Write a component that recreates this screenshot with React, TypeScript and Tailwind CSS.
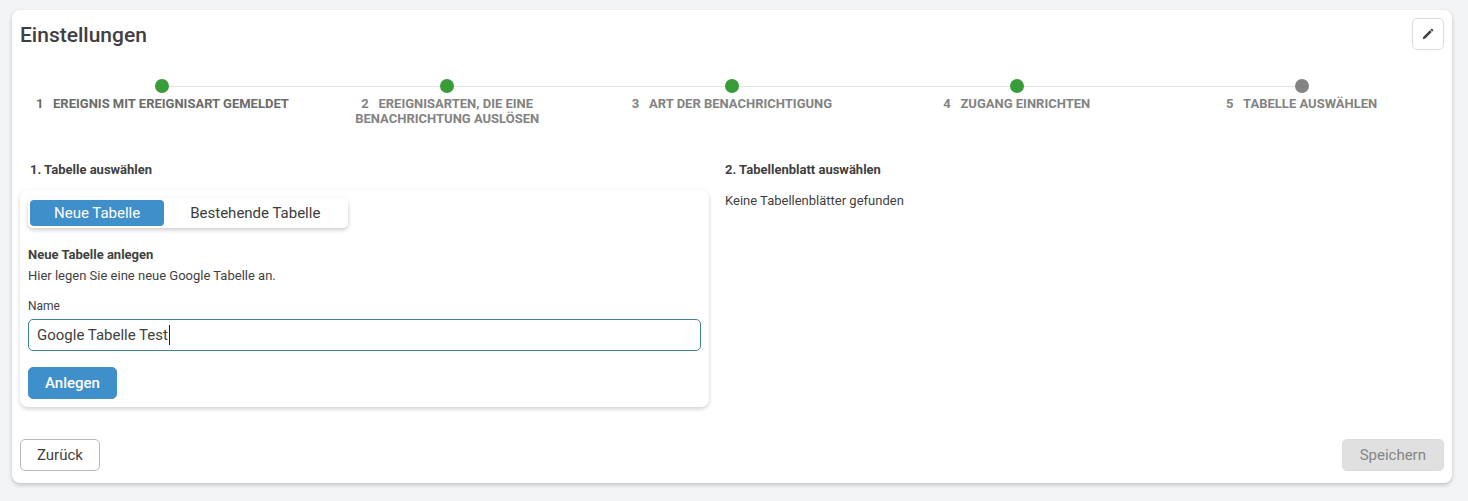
import { useState } from "react";

const steps = [
  { label: "Ereignis mit Ereignisart gemeldet", done: true },
  { label: "Ereignisarten, die eine Benachrichtung auslösen", done: true },
  { label: "Art der Benachrichtigung", done: true },
  { label: "Zugang einrichten", done: true },
  { label: "Tabelle auswählen", done: false },
];

function PencilIcon() {
  return (
    <svg viewBox="0 0 14 14" className="size-[14px]" fill="currentColor" aria-hidden="true">
      <path d="M1.7 12.3 2.4 9.7 8.9 3.2 10.8 5.1 4.3 11.6Z" />
      <path d="M9.4 2.7 10.2 1.9Q10.7 1.5 11.2 1.9L12.1 2.8Q12.5 3.3 12.1 3.8L11.3 4.6Z" />
    </svg>
  );
}

function Stepper() {
  return (
    <ol className="mt-7 grid grid-cols-5">
      {steps.map((step, index) => (
        <li key={step.label} className="flex flex-col items-center">
          <div className="flex w-full items-center">
            <span className={index === 0 ? "flex-1" : "h-px flex-1 bg-[#e2e2e2]"} />
            <span
              className={
                step.done
                  ? "size-[14px] rounded-full bg-[#389c38]"
                  : "size-[14px] rounded-full bg-[#838383]"
              }
            />
            <span
              className={index === steps.length - 1 ? "flex-1" : "h-px flex-1 bg-[#e2e2e2]"}
            />
          </div>
          <span
            className={
              index === 0
                ? "mt-[3px] px-3 text-center text-[13px] leading-[15px] font-bold text-[#6b6b6b] uppercase"
                : "mt-[3px] px-10 text-center text-[13px] leading-[15px] font-bold text-[#838383] uppercase"
            }
          >
            {`${index + 1}\u00a0\u00a0\u00a0${step.label}`}
          </span>
        </li>
      ))}
    </ol>
  );
}

export default function App() {
  const [tab, setTab] = useState("new");
  const [name, setName] = useState("Google Tabelle Test");
  const [pristine, setPristine] = useState(true);
  const active = "h-[26px] rounded-[4px] bg-[#3f8fcb] px-6 text-[15px] text-white";
  const inactive = "h-[26px] rounded-[4px] px-[26px] text-[15px] text-[#3c3c3e]";

  return (
    <div className="min-h-screen bg-[#f2f4f5] px-3 py-[10px] pr-4 font-['Roboto',sans-serif] text-[13px] leading-5 text-[#3f3f41]">
      <main className="rounded-lg bg-white px-2 pt-2 pb-3 shadow-[0_2px_4px_rgba(0,0,0,0.2)]">
        <header className="flex items-start justify-between">
          <h1 className="pt-px text-[21px] leading-8 font-medium">Einstellungen</h1>
          <button
            type="button"
            aria-label="Bearbeiten"
            className="flex size-8 items-center justify-center rounded-[5px] border border-[#dcdcdc]"
          >
            <PencilIcon />
          </button>
        </header>

        <Stepper />

        <div className="mt-[34px] grid grid-cols-[689fr_719fr] gap-4">
          <section>
            <h2 className="pl-[10px] font-bold">1. Tabelle auswählen</h2>
            <div className="mt-[10px] rounded-lg p-2 shadow-[0_2px_4px_rgba(0,0,0,0.18)]">
              <div className="flex">
                <div className="flex rounded-[5px] p-[2px] shadow-[0_2px_4px_rgba(0,0,0,0.2)]">
                  <button
                    type="button"
                    className={tab === "new" ? active : inactive}
                    onClick={() => setTab("new")}
                  >
                    Neue Tabelle
                  </button>
                  <button
                    type="button"
                    className={tab === "existing" ? active : inactive}
                    onClick={() => setTab("existing")}
                  >
                    Bestehende Tabelle
                  </button>
                </div>
              </div>
              <h3 className="mt-4 leading-[21px] font-bold">Neue Tabelle anlegen</h3>
              <p className="leading-[21px]">Hier legen Sie eine neue Google Tabelle an.</p>
              <label htmlFor="table-name" className="mt-[10px] block text-xs leading-5">
                Name
              </label>
              <div className="relative mt-[3px]">
                <input
                  id="table-name"
                  type="text"
                  value={name}
                  onFocus={() => setPristine(false)}
                  onChange={(event) => setName(event.target.value)}
                  className="block h-8 w-full rounded-[5px] border border-[#418590] px-2 text-[15px] outline-none"
                />
                {pristine && (
                  <span className="pointer-events-none absolute top-[6px] left-[141px] h-5 w-px bg-[#222222]" />
                )}
              </div>
              <button
                type="button"
                className="mt-4 block h-8 rounded-[5px] border border-[#3f8fcb] bg-[#3f8fcb] px-4 text-[15px] font-medium text-white"
              >
                Anlegen
              </button>
            </div>
          </section>
          <section>
            <h2 className="font-bold">2. Tabellenblatt auswählen</h2>
            <p className="mt-[11px]">Keine Tabellenblätter gefunden</p>
          </section>
        </div>

        <footer className="mt-8 flex justify-between">
          <button
            type="button"
            className="h-8 rounded-[5px] border border-[#b9b9b9] px-4 text-[15px]"
          >
            Zurück
          </button>
          <button
            type="button"
            disabled
            className="h-8 rounded-[5px] border border-[#dcdcdc] bg-[#e0e0e0] px-[17px] text-[15px] text-[#858585]"
          >
            Speichern
          </button>
        </footer>
      </main>
    </div>
  );
}
